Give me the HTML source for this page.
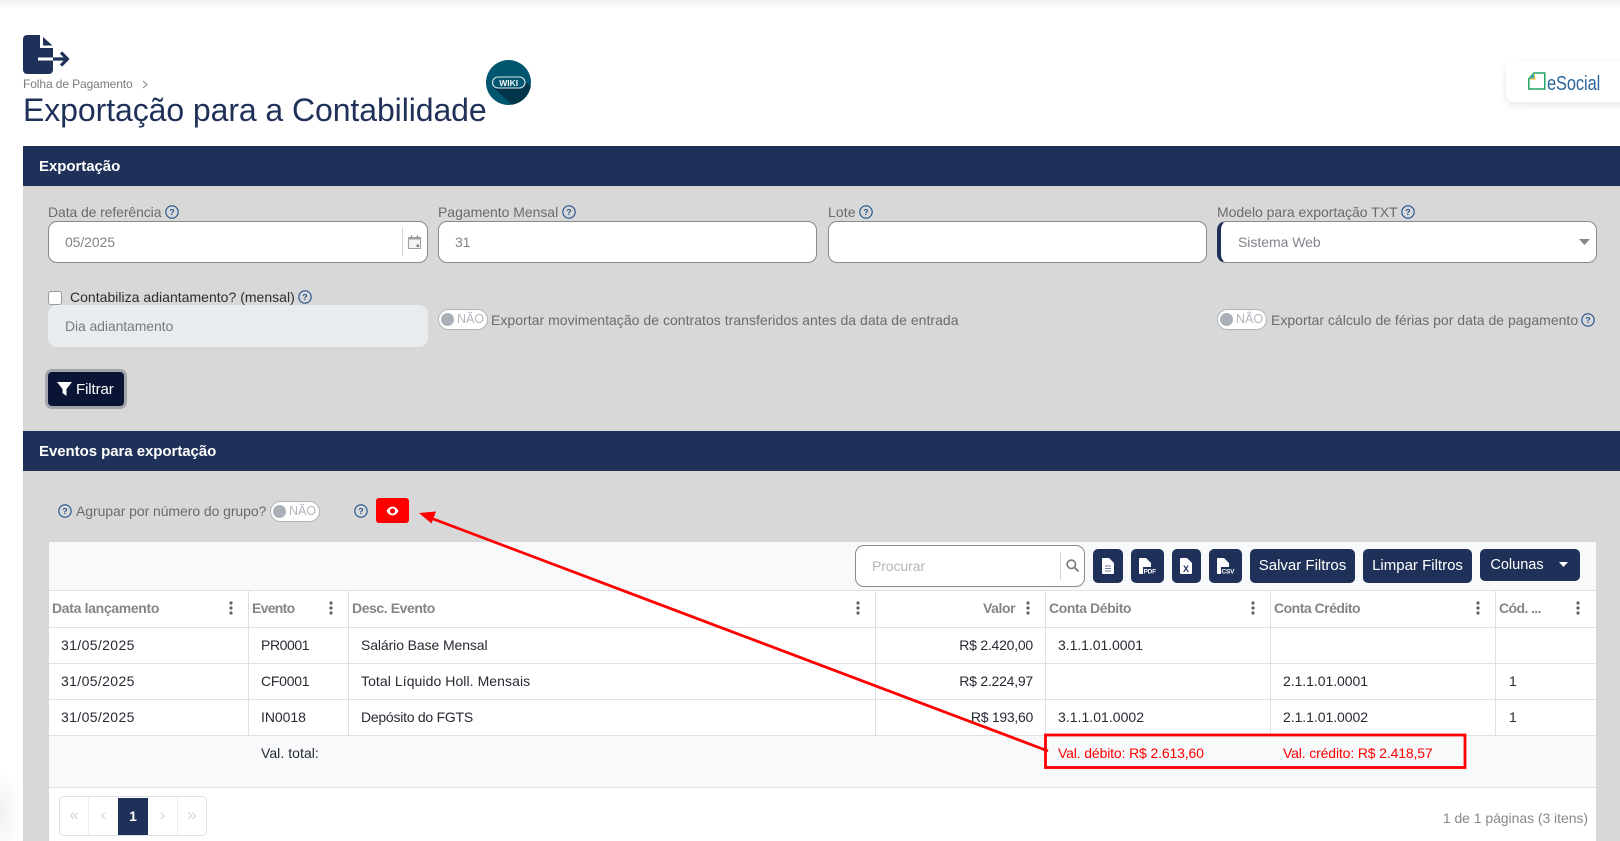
<!DOCTYPE html>
<html lang="pt-BR"><head><meta charset="utf-8"><title>Exportação para a Contabilidade</title>
<style>
*{box-sizing:border-box}
html,body{margin:0;padding:0;width:1620px;height:841px;overflow:hidden;background:#fff;font-family:"Liberation Sans",sans-serif}
.a{position:absolute}
.t{position:absolute;white-space:nowrap;line-height:18px;font-size:14px;color:#6b6b6b;letter-spacing:-.1px}
.bar{position:absolute;left:23px;width:1597px;background:#1f3158;color:#fff;font-weight:bold;font-size:15px;line-height:41px;padding-left:16px;letter-spacing:-.05px}
.inp{position:absolute;background:#fff;border:1px solid #8a8a8a;border-radius:9px;height:42px;top:221px}
.h{position:absolute;width:14px;height:14px}
.c{position:absolute;white-space:nowrap;line-height:18px;font-size:14px;color:#262a33;letter-spacing:-.05px}
.th{position:absolute;white-space:nowrap;line-height:18px;font-size:14px;font-weight:bold;color:#858585;top:599px;letter-spacing:-.42px}
.ln{position:absolute;background:#dee2e6}
.btn{position:absolute;background:#1f3158;border-radius:5px;color:#fff;font-size:15px;text-align:center;top:549px;height:34px;line-height:34px;letter-spacing:0}
.tg{position:absolute;width:50px;height:21px;border:1px solid #aeb4bb;border-radius:11px;background:#fff;color:#b2b7bd;font-size:12.5px;line-height:19px;padding-left:18px}
.tg:before{content:"";position:absolute;left:2px;top:3px;width:13px;height:13px;border-radius:50%;background:#aab0b7}
.pg{position:absolute;top:797px;height:38px;line-height:36px;text-align:center;color:#d3d5d8;font-size:17px}
</style></head><body>
<div class="a" style="left:0;top:0;width:1620px;height:8px;background:linear-gradient(#f1f1f1,#fff)"></div>
<div class="a" style="left:0;top:770px;width:22px;height:71px;background:radial-gradient(ellipse at 0 60%,#f0f0f0,#fff 70%)"></div>

<!-- page icon -->
<svg class="a" style="left:23px;top:35px" width="46" height="40" viewBox="0 0 46 40">
<path d="M4 0H17V13H30V35a4 4 0 0 1-4 4H4a4 4 0 0 1-4-4V4a4 4 0 0 1 4-4z" fill="#1f3158"/>
<path d="M20 2 29.500 10.500H20z" fill="#1f3158"/>
<path d="M15 24H30" stroke="#fff" stroke-width="3"/>
<path d="M30 24H43.500M38 17.500 44.500 24 38 30.500" stroke="#1f3158" stroke-width="3.200" fill="none"/>
</svg>
<div class="t" style="left:23px;top:75px;font-size:12px;color:#7b7b7b;letter-spacing:-.1px">Folha de Pagamento</div>
<svg class="a" style="left:142px;top:80px" width="6" height="9"><path d="M1 1 5 4.500 1 8" stroke="#888" stroke-width="1.100" fill="none"/></svg>
<div class="t" style="left:23px;top:90px;font-size:32px;line-height:40px;color:#1f3158;letter-spacing:-.08px">Exportação para a Contabilidade</div>

<!-- wiki -->
<svg class="a" style="left:486px;top:60px" width="45" height="45" viewBox="0 0 45 45">
<circle cx="22.500" cy="22.500" r="22.500" fill="#00566e"/>
<path d="M7 27 26 44.700A22.500 22.500 0 0 0 44.800 26L38 21z" fill="#03364a"/>
<rect x="6.500" y="17" width="32.500" height="11" rx="5.500" fill="#00566e" stroke="#dfe7ea" stroke-width="1.100"/>
<text x="22.700" y="25.800" text-anchor="middle" font-family="Liberation Sans" font-size="8.500" font-weight="bold" fill="#f2f5f6">WIKI</text>
</svg>

<!-- esocial -->
<div class="a" style="left:1506px;top:62px;width:130px;height:40px;background:#fff;border-radius:8px;box-shadow:0 3px 8px rgba(0,0,0,.10)"></div>
<svg class="a" style="left:1528px;top:72px" width="18" height="18" viewBox="0 0 18 18">
<path d="M.8 7 6 1H16.800V17H.8z" fill="#fff" stroke="#1fa463" stroke-width="1.500"/>
<path d="M1.500 7.500 6.500 2 7.500 7.500z" fill="#f4b223"/><path d="M2.500 6.500 6 2.500V6z" fill="#2f9bdc"/>
</svg>
<div class="t" style="left:1547px;top:73px;font-size:20px;line-height:22px;color:#2b659b;letter-spacing:-.1px;transform:scaleX(.82);transform-origin:0 50%">eSocial</div>

<!-- section 1 -->
<div class="bar" style="top:146px;height:40px">Exportação</div>
<div class="a" style="left:23px;top:186px;width:1597px;height:245px;background:#d8d8d8"></div>

<div class="t" style="left:48px;top:203px">Data de referência</div>
<svg class="h" style="left:165px;top:205px" viewBox="0 0 14 14"><circle cx="7" cy="7" r="6.200" fill="none" stroke="#1f4e8c" stroke-width="1.100"/><text x="7" y="10" text-anchor="middle" font-size="8.500" font-weight="bold" font-family="Liberation Sans" fill="#1f4e8c">?</text></svg>
<div class="t" style="left:438px;top:203px;letter-spacing:-.03px">Pagamento Mensal</div>
<svg class="h" style="left:562px;top:205px" viewBox="0 0 14 14"><circle cx="7" cy="7" r="6.200" fill="none" stroke="#1f4e8c" stroke-width="1.100"/><text x="7" y="10" text-anchor="middle" font-size="8.500" font-weight="bold" font-family="Liberation Sans" fill="#1f4e8c">?</text></svg>
<div class="t" style="left:828px;top:203px;letter-spacing:.1px">Lote</div>
<svg class="h" style="left:859px;top:205px" viewBox="0 0 14 14"><circle cx="7" cy="7" r="6.200" fill="none" stroke="#1f4e8c" stroke-width="1.100"/><text x="7" y="10" text-anchor="middle" font-size="8.500" font-weight="bold" font-family="Liberation Sans" fill="#1f4e8c">?</text></svg>
<div class="t" style="left:1217px;top:203px;letter-spacing:-.02px">Modelo para exportação TXT</div>
<svg class="h" style="left:1401px;top:205px" viewBox="0 0 14 14"><circle cx="7" cy="7" r="6.200" fill="none" stroke="#1f4e8c" stroke-width="1.100"/><text x="7" y="10" text-anchor="middle" font-size="8.500" font-weight="bold" font-family="Liberation Sans" fill="#1f4e8c">?</text></svg>

<div class="inp" style="left:48px;width:380px"></div>
<div class="t" style="left:65px;top:233px;color:#80858b">05/2025</div>
<div class="a" style="left:402px;top:227px;width:1px;height:29px;background:#d5d5d5"></div>
<svg class="a" style="left:407px;top:234px" width="15" height="16" viewBox="0 0 15 16"><path d="M1.500 3.500H13.500V14.500H1.500z" fill="#f4f4f4" stroke="#a2a2a2" stroke-width="1.100"/><path d="M1.500 3.500H13.500V5.500H1.500z" fill="#a2a2a2"/><path d="M4.500 1.500V4M10.500 1.500V4" stroke="#808080" stroke-width="1.300"/><rect x="9.500" y="10.500" width="2.500" height="2.500" fill="#808080"/></svg>
<div class="inp" style="left:438px;width:379px"></div>
<div class="t" style="left:455px;top:233px;color:#80858b">31</div>
<div class="inp" style="left:828px;width:379px"></div>
<div class="inp" style="left:1217px;width:380px;border-left:4px solid #1f3158"></div>
<div class="t" style="left:1238px;top:233px;color:#80858b;letter-spacing:-.03px">Sistema Web</div>
<svg class="a" style="left:1579px;top:239px" width="11" height="6"><path d="M0 0H11L5.500 6z" fill="#85878a"/></svg>

<div class="a" style="left:48px;top:291px;width:14px;height:14px;background:#fff;border:1px solid #9a9a9a;border-radius:3px"></div>
<div class="t" style="left:70px;top:288px;color:#2d2d2d;letter-spacing:.02px">Contabiliza adiantamento? (mensal)</div>
<svg class="h" style="left:298px;top:290px" viewBox="0 0 14 14"><circle cx="7" cy="7" r="6.200" fill="none" stroke="#1f4e8c" stroke-width="1.100"/><text x="7" y="10" text-anchor="middle" font-size="8.500" font-weight="bold" font-family="Liberation Sans" fill="#1f4e8c">?</text></svg>
<div class="a" style="left:48px;top:305px;width:380px;height:42px;background:#e9ecef;border-radius:9px"></div>
<div class="t" style="left:65px;top:317px;color:#777c82">Dia adiantamento</div>

<div class="tg" style="left:438px;top:309px">NÃO</div>
<div class="t" style="left:491px;top:311px;letter-spacing:.03px">Exportar movimentação de contratos transferidos antes da data de entrada</div>
<div class="tg" style="left:1217px;top:309px">NÃO</div>
<div class="t" style="left:1271px;top:311px;letter-spacing:.01px">Exportar cálculo de férias por data de pagamento</div>
<svg class="h" style="left:1581px;top:313px" viewBox="0 0 14 14"><circle cx="7" cy="7" r="6.200" fill="none" stroke="#1f4e8c" stroke-width="1.100"/><text x="7" y="10" text-anchor="middle" font-size="8.500" font-weight="bold" font-family="Liberation Sans" fill="#1f4e8c">?</text></svg>

<div class="a" style="left:48px;top:372px;width:76px;height:34px;background:#0a1435;border-radius:4px;box-shadow:0 0 0 3px #a2a5ab"></div>
<svg class="a" style="left:57px;top:382px" width="15" height="14" viewBox="0 0 15 14"><path d="M0 0H15L9.500 7V14L5.500 11V7z" fill="#fff"/></svg>
<div class="t" style="left:76px;top:381px;color:#fff;font-size:15px">Filtrar</div>

<!-- section 2 -->
<div class="bar" style="top:431px;height:40px">Eventos para exportação</div>
<div class="a" style="left:23px;top:471px;width:1597px;height:370px;background:#d8d8d8"></div>

<svg class="h" style="left:58px;top:504px" viewBox="0 0 14 14"><circle cx="7" cy="7" r="6.200" fill="none" stroke="#1f4e8c" stroke-width="1.100"/><text x="7" y="10" text-anchor="middle" font-size="8.500" font-weight="bold" font-family="Liberation Sans" fill="#1f4e8c">?</text></svg>
<div class="t" style="left:76px;top:502px;letter-spacing:-.07px">Agrupar por número do grupo?</div>
<div class="tg" style="left:270px;top:501px">NÃO</div>
<svg class="h" style="left:354px;top:504px" viewBox="0 0 14 14"><circle cx="7" cy="7" r="6.200" fill="none" stroke="#1f4e8c" stroke-width="1.100"/><text x="7" y="10" text-anchor="middle" font-size="8.500" font-weight="bold" font-family="Liberation Sans" fill="#1f4e8c">?</text></svg>
<div class="a" style="left:376px;top:498px;width:33px;height:25px;background:#fe0000;border-radius:3px"></div>
<svg class="a" style="left:386px;top:506px" width="13" height="10" viewBox="0 0 15 11"><path d="M.5 5.500C3 1.500 5 .5 7.500 .5S12 1.500 14.500 5.500C12 9.500 10 10.500 7.500 10.500S3 9.500 .5 5.500z" fill="#fff"/><circle cx="7.500" cy="5.500" r="3" fill="#fe0000"/></svg>

<!-- table -->
<div class="a" style="left:49px;top:542px;width:1547px;height:299px;background:#fff"></div>
<div class="a" style="left:49px;top:542px;width:1547px;height:48px;background:#f8f9fa"></div>
<div class="a" style="left:49px;top:735px;width:1547px;height:52px;background:#f8f9fa"></div>
<div class="ln" style="left:49px;top:590px;width:1547px;height:1px"></div>
<div class="ln" style="left:49px;top:627px;width:1547px;height:1px"></div>
<div class="ln" style="left:49px;top:663px;width:1547px;height:1px"></div>
<div class="ln" style="left:49px;top:699px;width:1547px;height:1px"></div>
<div class="ln" style="left:49px;top:735px;width:1547px;height:1px"></div>
<div class="ln" style="left:49px;top:787px;width:1547px;height:1px"></div>
<div class="ln" style="left:248px;top:591px;width:1px;height:144px"></div>
<div class="ln" style="left:348px;top:591px;width:1px;height:144px"></div>
<div class="ln" style="left:875px;top:591px;width:1px;height:144px"></div>
<div class="ln" style="left:1045px;top:591px;width:1px;height:144px"></div>
<div class="ln" style="left:1270px;top:591px;width:1px;height:144px"></div>
<div class="ln" style="left:1495px;top:591px;width:1px;height:144px"></div>

<!-- toolbar -->
<div class="a" style="left:855px;top:545px;width:230px;height:42px;background:#fff;border:1px solid #8a8a8a;border-radius:9px"></div>
<div class="t" style="left:872px;top:557px;color:#b3b6ba">Procurar</div>
<div class="a" style="left:1060px;top:552px;width:1px;height:28px;background:#d5d5d5"></div>
<svg class="a" style="left:1066px;top:559px" width="13" height="13" viewBox="0 0 13 13"><circle cx="5.300" cy="5.300" r="4.200" fill="none" stroke="#75797e" stroke-width="1.600"/><path d="M8.500 8.500 12.500 12.500" stroke="#75797e" stroke-width="1.800"/></svg>

<div class="btn" style="left:1093px;width:30px"></div>
<svg class="a" style="left:1102px;top:558px" width="12" height="16" viewBox="0 0 12 16"><path d="M0 1a1 1 0 0 1 1-1H7L12 5V15a1 1 0 0 1-1 1H1a1 1 0 0 1-1-1z" fill="#fff"/><path d="M3 8H9M3 10.500H9M3 13H9" stroke="#6f7f9c"/></svg>
<div class="btn" style="left:1131px;width:33px"></div>
<svg class="a" style="left:1139px;top:558px" width="18" height="17" viewBox="0 0 18 17"><path d="M0 1a1 1 0 0 1 1-1H7L12 5V15a1 1 0 0 1-1 1H1a1 1 0 0 1-1-1z" fill="#fff"/><rect x="4" y="9" width="14" height="8" fill="#1f3158"/><text x="4.500" y="15.600" font-size="6.500" font-weight="bold" font-family="Liberation Sans" fill="#fff" letter-spacing="-.2">PDF</text></svg>
<div class="btn" style="left:1172px;width:29px"></div>
<svg class="a" style="left:1180px;top:558px" width="12" height="16" viewBox="0 0 12 16"><path d="M0 1a1 1 0 0 1 1-1H7L12 5V15a1 1 0 0 1-1 1H1a1 1 0 0 1-1-1z" fill="#fff"/><text x="6" y="14" text-anchor="middle" font-size="9" font-weight="bold" font-family="Liberation Sans" fill="#1f3158">X</text></svg>
<div class="btn" style="left:1209px;width:33px"></div>
<svg class="a" style="left:1217px;top:558px" width="18" height="17" viewBox="0 0 18 17"><path d="M0 1a1 1 0 0 1 1-1H7L12 5V15a1 1 0 0 1-1 1H1a1 1 0 0 1-1-1z" fill="#fff"/><rect x="4" y="9" width="14" height="8" fill="#1f3158"/><text x="4.500" y="15.600" font-size="6.500" font-weight="bold" font-family="Liberation Sans" fill="#fff" letter-spacing="-.2">CSV</text></svg>
<div class="btn" style="left:1250px;width:105px">Salvar Filtros</div>
<div class="btn" style="left:1363px;width:109px">Limpar Filtros</div>
<div class="btn" style="left:1480px;width:100px;height:32px;line-height:32px;padding-right:26px;font-size:14.5px">Colunas</div>
<svg class="a" style="left:1559px;top:562px" width="9" height="5"><path d="M0 0H9L4.500 5z" fill="#fff"/></svg>

<!-- header -->
<div class="th" style="left:52px;letter-spacing:-.33px">Data lançamento</div>
<div class="th" style="left:252px;letter-spacing:-.7px">Evento</div>
<div class="th" style="left:352px">Desc. Evento</div>
<div class="th" style="left:983px">Valor</div>
<div class="th" style="left:1049px">Conta Débito</div>
<div class="th" style="left:1274px;letter-spacing:-.5px">Conta Crédito</div>
<div class="th" style="left:1499px;letter-spacing:-.6px">Cód. ...</div>
<svg class="a" style="left:0;top:0;pointer-events:none" width="1620" height="841"><g fill="#5f6165">
<circle cx="231" cy="603" r="1.600"/><circle cx="231" cy="608" r="1.600"/><circle cx="231" cy="613" r="1.600"/>
<circle cx="331" cy="603" r="1.600"/><circle cx="331" cy="608" r="1.600"/><circle cx="331" cy="613" r="1.600"/>
<circle cx="858" cy="603" r="1.600"/><circle cx="858" cy="608" r="1.600"/><circle cx="858" cy="613" r="1.600"/>
<circle cx="1028" cy="603" r="1.600"/><circle cx="1028" cy="608" r="1.600"/><circle cx="1028" cy="613" r="1.600"/>
<circle cx="1253" cy="603" r="1.600"/><circle cx="1253" cy="608" r="1.600"/><circle cx="1253" cy="613" r="1.600"/>
<circle cx="1478" cy="603" r="1.600"/><circle cx="1478" cy="608" r="1.600"/><circle cx="1478" cy="613" r="1.600"/>
<circle cx="1578" cy="603" r="1.600"/><circle cx="1578" cy="608" r="1.600"/><circle cx="1578" cy="613" r="1.600"/>
</g></svg>

<!-- rows -->
<div class="c" style="left:61px;top:636px;letter-spacing:.37px">31/05/2025</div>
<div class="c" style="left:261px;top:636px;letter-spacing:-.4px">PR0001</div>
<div class="c" style="left:361px;top:636px;letter-spacing:-.1px">Salário Base Mensal</div>
<div class="c" style="right:587px;top:636px;letter-spacing:-.23px">R$ 2.420,00</div>
<div class="c" style="left:1058px;top:636px">3.1.1.01.0001</div>

<div class="c" style="left:61px;top:672px;letter-spacing:.37px">31/05/2025</div>
<div class="c" style="left:261px;top:672px;letter-spacing:-.25px">CF0001</div>
<div class="c" style="left:361px;top:672px;letter-spacing:.07px">Total Líquido Holl. Mensais</div>
<div class="c" style="right:587px;top:672px;letter-spacing:-.23px">R$ 2.224,97</div>
<div class="c" style="left:1283px;top:672px">2.1.1.01.0001</div>
<div class="c" style="left:1509px;top:672px">1</div>

<div class="c" style="left:61px;top:708px;letter-spacing:.37px">31/05/2025</div>
<div class="c" style="left:261px;top:708px">IN0018</div>
<div class="c" style="left:361px;top:708px;letter-spacing:-.25px">Depósito do FGTS</div>
<div class="c" style="right:587px;top:708px;letter-spacing:-.28px">R$ 193,60</div>
<div class="c" style="left:1058px;top:708px;letter-spacing:.03px">3.1.1.01.0002</div>
<div class="c" style="left:1283px;top:708px">2.1.1.01.0002</div>
<div class="c" style="left:1509px;top:708px">1</div>

<div class="c" style="left:261px;top:744px;letter-spacing:.05px">Val. total:</div>
<div class="c" style="left:1058px;top:744px;color:#fe0000;letter-spacing:-.14px">Val. débito: R$ 2.613,60</div>
<div class="c" style="left:1283px;top:744px;color:#fe0000;letter-spacing:-.14px">Val. crédito: R$ 2.418,57</div>

<!-- pagination -->
<div class="a" style="left:59px;top:796px;width:148px;height:40px;border:1px solid #dee2e6;border-radius:5px;background:#fff"></div>
<div class="ln" style="left:88px;top:797px;width:1px;height:38px;background:#eceef0"></div>
<div class="ln" style="left:177px;top:797px;width:1px;height:38px;background:#eceef0"></div>
<div class="pg" style="left:60px;width:28px">«</div>
<div class="pg" style="left:89px;width:29px">‹</div>
<div class="a" style="left:118px;top:798px;width:30px;height:37px;background:#1f3158;color:#fff;text-align:center;font-weight:bold;font-size:14px;line-height:37px">1</div>
<div class="pg" style="left:148px;width:29px">›</div>
<div class="pg" style="left:178px;width:28px">»</div>
<div class="t" style="right:32px;top:809px;color:#85888c;letter-spacing:-.05px">1 de 1 páginas (3 itens)</div>

<!-- annotation -->
<svg class="a" style="left:0;top:0" width="1620" height="841">
<rect x="1045.500" y="735" width="419.500" height="32.500" fill="none" stroke="#fe0000" stroke-width="2.800"/>
<path d="M1048 751 432 518.500" stroke="#fe0000" stroke-width="2.800"/>
<path d="M419 513 436 511.500 431.500 523.500z" fill="#fe0000"/>
</svg>
</body></html>
